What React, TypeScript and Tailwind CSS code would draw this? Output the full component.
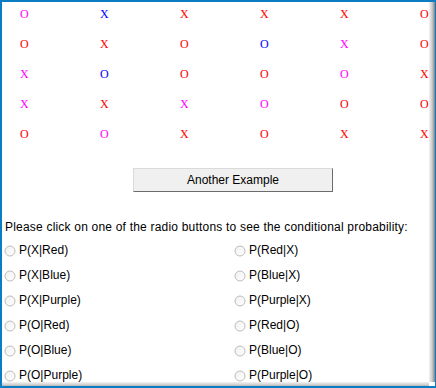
import React, { useState } from 'react';

type Cell = { ch: 'X' | 'O'; color: string };

const M = 'text-[#ff00ff]';
const B = 'text-[#0000ff]';
const R = 'text-[#ff0000]';

const grid: Cell[][] = [
  [{ ch: 'O', color: M }, { ch: 'X', color: B }, { ch: 'X', color: R }, { ch: 'X', color: R }, { ch: 'X', color: R }, { ch: 'O', color: R }],
  [{ ch: 'O', color: R }, { ch: 'X', color: R }, { ch: 'O', color: R }, { ch: 'O', color: B }, { ch: 'X', color: M }, { ch: 'O', color: R }],
  [{ ch: 'X', color: M }, { ch: 'O', color: B }, { ch: 'O', color: R }, { ch: 'O', color: R }, { ch: 'O', color: M }, { ch: 'X', color: R }],
  [{ ch: 'X', color: M }, { ch: 'X', color: R }, { ch: 'X', color: M }, { ch: 'O', color: M }, { ch: 'O', color: R }, { ch: 'O', color: R }],
  [{ ch: 'O', color: R }, { ch: 'O', color: M }, { ch: 'X', color: R }, { ch: 'O', color: R }, { ch: 'X', color: R }, { ch: 'X', color: R }],
];

const options = [
  ['P(X|Red)', 'P(Red|X)'],
  ['P(X|Blue)', 'P(Blue|X)'],
  ['P(X|Purple)', 'P(Purple|X)'],
  ['P(O|Red)', 'P(Red|O)'],
  ['P(O|Blue)', 'P(Blue|O)'],
  ['P(O|Purple)', 'P(Purple|O)'],
];

function Radio({ checked }: { checked: boolean }) {
  return (
    <svg width="12" height="12" viewBox="0 0 12 12" className="shrink-0">
      <defs>
        <linearGradient id="rg" x1="0" y1="0" x2="1" y2="1">
          <stop offset="0" stopColor="#f0f0f0" />
          <stop offset="1" stopColor="#ffffff" />
        </linearGradient>
      </defs>
      <circle cx="6" cy="6" r="5" fill="url(#rg)" stroke="#bdbdbd" strokeWidth="1" />
      {checked && <circle cx="6" cy="6" r="2" fill="#333" />}
    </svg>
  );
}

export default function App() {
  const [picked, setPicked] = useState<string | null>(null);

  return (
    <div className="w-[436px] h-[388px] bg-white border-t-2 border-l-2 border-b-2 border-r border-[#0b7dc3] overflow-hidden font-['Liberation_Sans',Arial,sans-serif] text-black">
      <div className="w-[427px] h-[380px] bg-white overflow-hidden shadow-[1px_0_0_#ececec,0_1px_0_#ececec,2px_0_0_#e0e0e0,0_2px_0_#e0e0e0,3px_0_0_#d2d2d2,0_3px_0_#d2d2d2,4px_0_0_#c0c0c0,0_4px_0_#c0c0c0,5px_0_0_#a8a8a8,0_5px_0_#a8a8a8,6px_0_0_#8c8c8c,0_6px_0_#8c8c8c]">
        {/* letters */}
        <div className="pl-[18px] flex flex-col gap-y-[6px] font-['Liberation_Serif','Times_New_Roman',serif] text-[12px] leading-[24px]">
          {grid.map((row, i) => (
            <div key={i} className="grid grid-cols-[repeat(6,80px)] shrink-0">
              {row.map((c, j) => (
                <span key={j} className={c.color}>{c.ch}</span>
              ))}
            </div>
          ))}
        </div>

        <button className="mt-[22px] ml-[131px] w-[200px] h-[24px] bg-[#f0f0f0] border border-[#dadada] border-r-[#6c6c6c] border-b-[#6c6c6c] text-[12px] text-black">
          Another Example
        </button>

        <p className="mt-[27px] ml-[3px] text-[12px] leading-[16px] tracking-[0.2px] whitespace-nowrap">
          Please click on one of the radio buttons to see the conditional probability:
        </p>

        <div className="mt-[3px] ml-[2px] grid grid-cols-[230px_1fr]">
          {options.map((pair) =>
            pair.map((label) => (
              <label key={label} className="h-[25px] flex items-center gap-[3px] text-[12px] leading-[25px] cursor-pointer" onClick={() => setPicked(label)}>
                <Radio checked={picked === label} />
                <span>{label}</span>
              </label>
            ))
          )}
        </div>
      </div>
    </div>
  );
}
